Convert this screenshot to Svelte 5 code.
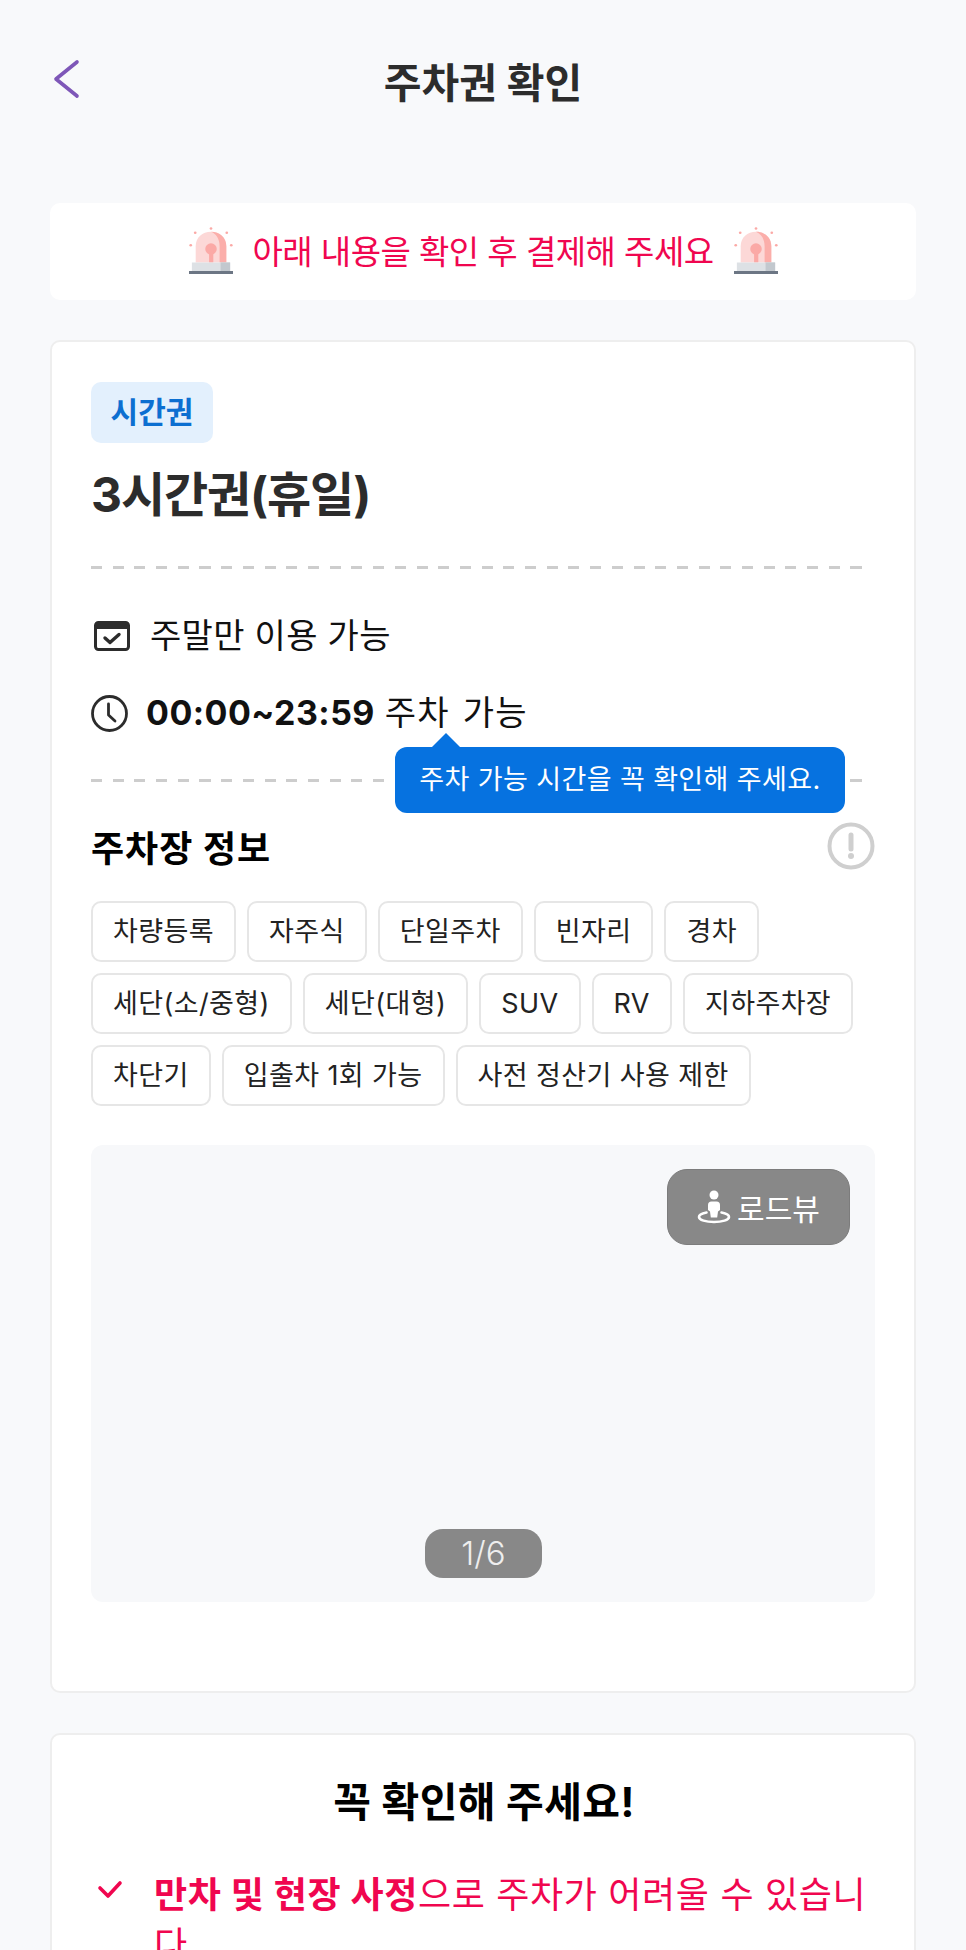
<script>
  const tags = [
    '차량등록', '자주식', '단일주차', '빈자리', '경차',
    '세단(소/중형)', '세단(대형)', 'SUV', 'RV', '지하주차장',
    '차단기', '입출차 1회 가능', '사전 정산기 사용 제한',
  ];
</script>

{#snippet siren()}
  <svg class="siren" viewBox="0 0 46 50" aria-hidden="true">
    <g fill="#fba9a6">
      <circle cx="23" cy="2.500" r="1.400" />
      <circle cx="6.500" cy="7" r="1.400" />
      <circle cx="39.500" cy="7" r="1.400" />
      <circle cx="1.800" cy="20" r="1.400" />
      <circle cx="44.200" cy="20" r="1.400" />
    </g>
    <path d="M7 38V21C7 12 14 6 23 6s16 6 16 15v17z" fill="#fcd8d7" />
    <path d="M23 6c9 0 16 6 16 15v17h-7V21c0-8-4-13-9-15z" fill="#fbaeaa" />
    <circle cx="23" cy="24" r="6" fill="#fba9a6" />
    <rect x="21" y="25" width="4.400" height="13" fill="#fba9a6" />
    <path d="M3 38h40v9H3z" fill="#dde1e5" />
    <path d="M33 38h10v9H33z" fill="#c2c8ce" />
    <path d="M0 47h46v3H0z" fill="#6c7684" />
  </svg>
{/snippet}

<div class="page">
  <header>
    <button class="back" aria-label="뒤로">
      <svg width="28" height="40" viewBox="0 0 28 40" fill="none">
        <path d="M25 3 L4 20 L25 37" stroke="#7e57b8" stroke-width="3.600" stroke-linecap="round" stroke-linejoin="round" />
      </svg>
    </button>
    <h1>주차권 확인</h1>
  </header>

  <main>
    <div class="notice">
      {@render siren()}
      <span>아래 내용을 확인 후 결제해 주세요</span>
      {@render siren()}
    </div>

    <section class="card ticket">
      <span class="badge">시간권</span>
      <h2>3시간권(휴일)</h2>
      <div class="dash first"></div>

      <div class="row days">
        <svg class="ico-cal" width="36" height="30" viewBox="0 0 36 30" fill="none">
          <rect x="1.500" y="1.500" width="33" height="27" rx="3" stroke="#2c2c2c" stroke-width="3" />
          <path d="M1.500 4.500a3 3 0 0 1 3-3h27a3 3 0 0 1 3 3V8h-33z" fill="#2c2c2c" />
          <path d="M11 17l5 4.500 9-8" stroke="#2c2c2c" stroke-width="3.400" stroke-linecap="round" stroke-linejoin="round" />
        </svg>
        <span>주말만 이용 가능</span>
      </div>

      <div class="row hours">
        <svg class="ico-clock" width="37" height="37" viewBox="0 0 37 37" fill="none">
          <circle cx="18.500" cy="18.500" r="17" stroke="#2c2c2c" stroke-width="2.800" />
          <path d="M17.500 9v11l6.500 6" stroke="#2c2c2c" stroke-width="2.800" stroke-linecap="round" stroke-linejoin="round" />
        </svg>
        <span><b>00:00~23:59</b> 주차 가능</span>
        <div class="tooltip">주차 가능 시간을 꼭 확인해 주세요.</div>
      </div>

      <div class="dash second"></div>

      <div class="info-head">
        <h3>주차장 정보</h3>
        <svg width="48" height="48" viewBox="0 0 48 48" fill="none">
          <circle cx="24" cy="24" r="21.500" stroke="#cfcfcf" stroke-width="4" />
          <path d="M24 13v14" stroke="#cfcfcf" stroke-width="5" stroke-linecap="round" />
          <circle cx="24" cy="34" r="3" fill="#cfcfcf" />
        </svg>
      </div>

      <ul class="tags">
        {#each tags as tag}
          <li>{tag}</li>
        {/each}
      </ul>

      <div class="photo">
        <button class="roadview">
          <svg width="34" height="34" viewBox="0 0 34 34" fill="none">
            <circle cx="17" cy="5" r="4.500" fill="#fff" />
            <path d="M11 15a3.500 3.500 0 0 1 3.500-3.500h5A3.500 3.500 0 0 1 23 15v5l-2 1.500-.8 6h-6.400l-.8-6L11 20z" fill="#fff" />
            <path d="M9.500 22.500C5 23.300 2 24.800 2 27c0 3 7 5 15 5s15-2 15-5c0-2.200-3-3.700-7.500-4.500" stroke="#fff" stroke-width="2.600" stroke-linecap="round" />
          </svg>
          로드뷰
        </button>
        <div class="pager">1/6</div>
      </div>
    </section>

    <section class="card notes">
      <h3>꼭 확인해 주세요!</h3>
      <ul>
        <li>
          <svg width="26" height="20" viewBox="0 0 26 20" fill="none">
            <path d="M3 8l8 8L23 3" stroke="#f0064f" stroke-width="3.600" stroke-linecap="round" stroke-linejoin="round" />
          </svg>
          <p><b>만차 및 현장 사정</b>으로 주차가 어려울 수 있습니다.</p>
        </li>
      </ul>
    </section>
  </main>
</div>

<style>
  :global(body) {
    margin: 0;
    background: #f8f9fb;
  }

  .page {
    height: 1950px;
    overflow: hidden;
    background: #f8f9fb;
    font-family: Inter, "Noto Sans CJK KR", sans-serif;
    color: #000;
  }

  /* Header */
  header {
    position: relative;
    height: 163px;
    display: flex;
    justify-content: center;
    padding-top: 56px;
    box-sizing: border-box;
  }

  .back {
    position: absolute;
    left: 52px;
    top: 59px;
    padding: 0;
    border: 0;
    background: none;
    line-height: 0;
  }

  h1 {
    margin: 0;
    font-size: 41px;
    line-height: 54px;
    font-weight: 700;
    color: #2c2c2c;
  }

  main {
    padding: 40px 50px 0;
  }

  /* Alert strip */
  .notice {
    box-sizing: border-box;
    height: 97px;
    padding-bottom: 3px;
    background: #fff;
    border-radius: 10px;
    display: flex;
    align-items: center;
    justify-content: center;
    gap: 20px;
    margin-bottom: 40px;
    color: #f0064f;
    font-size: 33px;
    letter-spacing: -0.55px;
  }

  .siren {
    width: 44px;
    height: 48px;
  }

  /* Cards */
  .card {
    background: #fff;
    border: 2px solid #eeeeee;
    border-radius: 10px;
    box-sizing: border-box;
  }

  .ticket {
    height: 1353px;
    padding: 40px 39px 0;
    margin-bottom: 40px;
  }

  .badge {
    display: inline-block;
    width: 122px;
    height: 61px;
    line-height: 61px;
    text-align: center;
    border-radius: 10px;
    background: #e3f0fd;
    color: #0c6fd1;
    font-size: 30px;
    font-weight: 700;
  }

  h2 {
    margin: 19px 0 0;
    font-size: 48px;
    line-height: 66px;
    font-weight: 700;
    letter-spacing: -1.1px;
    color: #2c2c2c;
  }

  .dash {
    width: 775px;
    height: 3px;
    background: repeating-linear-gradient(90deg, #cdcdcd 0 11px, transparent 11px 21.7px);
  }

  .dash.first {
    margin-top: 38px;
  }

  .dash.second {
    margin-top: 42px;
  }

  /* Info rows */
  .row {
    display: flex;
    align-items: center;
    font-size: 34px;
    line-height: 48px;
    letter-spacing: 0.3px;
    color: #111;
  }

  .days {
    margin-top: 43px;
    gap: 20px;
  }

  .ico-cal {
    margin-left: 3px;
  }

  .hours {
    position: relative;
    margin-top: 29px;
    gap: 18px;
    letter-spacing: 1.3px;
    word-spacing: 2px;
  }

  .hours b {
    font-weight: 700;
    letter-spacing: 0.45px;
    margin-right: -3px;
  }

  .tooltip {
    position: absolute;
    left: 304px;
    top: 58px;
    width: 450px;
    height: 66px;
    line-height: 66px;
    text-align: center;
    background: #0672e0;
    border-radius: 12px;
    color: #fff;
    font-size: 27px;
    letter-spacing: 0.4px;
    word-spacing: 0;
  }

  .tooltip::before {
    content: '';
    position: absolute;
    left: 36px;
    top: -14px;
    border: 15px solid transparent;
    border-top: 0;
    border-bottom-color: #0672e0;
  }

  /* Parking info */
  .info-head {
    display: flex;
    align-items: center;
    justify-content: space-between;
    width: 784px;
    margin-top: 40px;
    height: 48px;
  }

  h3 {
    margin: 0;
    font-size: 36px;
    font-weight: 700;
    letter-spacing: 1px;
  }

  .tags {
    list-style: none;
    margin: 31px 0 0;
    padding: 0;
    display: flex;
    flex-wrap: wrap;
    gap: 11px;
    width: 790px;
  }

  .tags li {
    box-sizing: border-box;
    height: 61px;
    line-height: 57px;
    padding: 0 20px;
    border: 2px solid #e6e6e6;
    border-radius: 10px;
    font-size: 27px;
    letter-spacing: 0.4px;
    color: #222;
  }

  .photo {
    position: relative;
    width: 784px;
    height: 457px;
    margin-top: 39px;
    border-radius: 12px;
    background: #f7f8fa;
  }

  .roadview {
    position: absolute;
    top: 24px;
    right: 25px;
    width: 183px;
    height: 76px;
    display: flex;
    align-items: center;
    justify-content: center;
    gap: 6px;
    padding: 0;
    border: 1px solid #7c7c7c;
    border-radius: 20px;
    background: #888;
    color: #fff;
    font-family: inherit;
    font-size: 30px;
  }

  .pager {
    position: absolute;
    left: 334px;
    top: 384px;
    width: 117px;
    height: 49px;
    line-height: 49px;
    text-align: center;
    border-radius: 18px;
    background: #888;
    color: #eee;
    font-size: 33px;
    font-weight: 300;
  }

  /* Notes card */
  .notes {
    padding: 40px 39px 0;
    height: 500px;
  }

  .notes h3 {
    text-align: center;
    font-size: 41px;
    line-height: 54px;
    letter-spacing: 0.4px;
    color: #000;
    margin-right: -2px;
  }

  .notes ul {
    list-style: none;
    margin: 41px 0 0;
    padding: 0;
  }

  .notes li {
    display: flex;
    gap: 31px;
    margin-left: 6px;
  }

  .notes li svg {
    flex-shrink: 0;
    margin-top: 10px;
  }

  .notes p {
    margin: 0;
    width: 724px;
    font-size: 36px;
    line-height: 50px;
    letter-spacing: 0.65px;
    color: #f0064f;
    word-break: break-all;
  }
</style>
